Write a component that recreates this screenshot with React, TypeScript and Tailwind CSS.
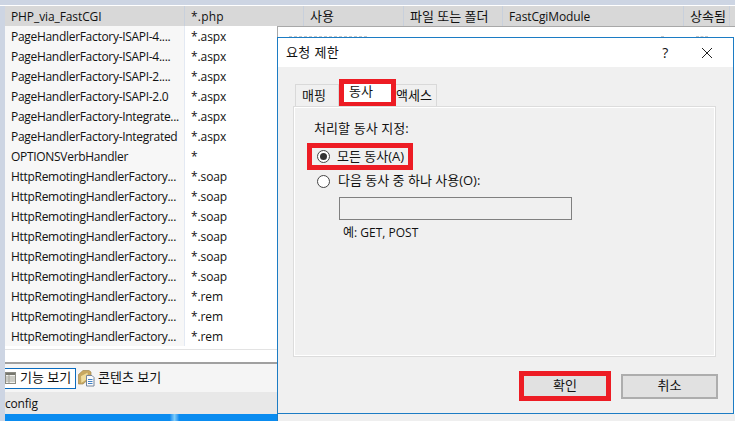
const FONT = "font-['Open_Sans','Noto_Sans_CJK_KR',sans-serif]";

const rows: [string, string][] = [
  ["PageHandlerFactory-ISAPI-4....", "*.aspx"],
  ["PageHandlerFactory-ISAPI-4....", "*.aspx"],
  ["PageHandlerFactory-ISAPI-2....", "*.aspx"],
  ["PageHandlerFactory-ISAPI-2.0", "*.aspx"],
  ["PageHandlerFactory-Integrate...", "*.aspx"],
  ["PageHandlerFactory-Integrated", "*.aspx"],
  ["OPTIONSVerbHandler", "*"],
  ["HttpRemotingHandlerFactory...", "*.soap"],
  ["HttpRemotingHandlerFactory...", "*.soap"],
  ["HttpRemotingHandlerFactory...", "*.soap"],
  ["HttpRemotingHandlerFactory...", "*.soap"],
  ["HttpRemotingHandlerFactory...", "*.soap"],
  ["HttpRemotingHandlerFactory...", "*.soap"],
  ["HttpRemotingHandlerFactory...", "*.rem"],
  ["HttpRemotingHandlerFactory...", "*.rem"],
  ["HttpRemotingHandlerFactory...", "*.rem"],
];

const headerCols = [
  { label: "*.php", w: "w-[119px]", cls: "tracking-[0.2px]" },
  { label: "사용", w: "w-[100px]", cls: "text-[13px]" },
  { label: "파일 또는 폴더", w: "w-[99px]", cls: "text-[13px]" },
  { label: "FastCgiModule", w: "w-[181px]", cls: "tracking-[-0.1px]" },
  { label: "상속됨", w: "w-[46px]", cls: "text-[13px]" },
];

function FeatureIcon() {
  return (
    <svg width="11" height="14" viewBox="0 0 11 14" className="shrink-0">
      <rect x="0.5" y="1.5" width="10" height="11" fill="#f2f2ee" stroke="#8c8c84" />
      <rect x="1" y="2" width="9" height="2" fill="#77776f" />
      <path d="M1 6h9M1 8h9M1 10h9M4 4v8" stroke="#a5a59c" strokeWidth="1" />
    </svg>
  );
}

function ContentIcon() {
  return (
    <svg width="17" height="18" viewBox="0 0 17 18" className="shrink-0">
      <path d="M0.5 5.5L5 1.5h6l2 1.5v5l-8 7H0.5z" fill="#c9a860" stroke="#a08850" strokeWidth="0.7" />
      <path d="M2.5 7L10 3v7l-7 4.5z" fill="#f0dc9c" stroke="#b89c58" strokeWidth="0.6" />
      <path d="M8.5 6.5h5.5l2 2v8.5H8.5z" fill="#fbfbfb" stroke="#75849a" />
      <path d="M10 10.5h4.5M10 12.5h4.5M10 14.5h4.5" stroke="#3f7fc4" strokeWidth="1" />
    </svg>
  );
}

function Radio({ checked }: { checked?: boolean }) {
  return (
    <span className="flex size-[13px] shrink-0 items-center justify-center rounded-full border border-[#444] bg-white">
      {checked && <span className="size-[7px] rounded-full bg-[#333]" />}
    </span>
  );
}

function BackgroundTable() {
  return (
    <div className="flex h-full w-[272px] flex-col">
      <div className="flex-none bg-white">
        {rows.map(([name, path], i) => (
          <div key={i} className="flex h-5 items-center">
            <div className="flex h-full w-[180px] items-center whitespace-nowrap border-r border-[#e3e9f3] bg-[#f7f7f7] pl-[6px] pt-px tracking-[-0.3px]">
              {name}
            </div>
            <div className="pl-[6px] pt-px tracking-[-0.1px]">{path}</div>
          </div>
        ))}
      </div>
      <div className="h-[3px] bg-white" />
      <div className="h-[13px] border-t border-[#e3e3e3] bg-white" />
      <div className="flex h-[30px] items-center border-t-2 border-[#a0a0a0] bg-[#f5f5f5]">
        <div className="flex h-[21px] w-[71px] items-center border-y-[1px] border-r-[1px] border-[#0a6cc0] bg-white">
          <FeatureIcon />
          <span className="ml-1 text-[13px]">기능 보기</span>
        </div>
        <div className="ml-[2px] flex items-center">
          <ContentIcon />
          <span className="ml-[3px] text-[13px]">콘텐츠 보기</span>
        </div>
      </div>
      <div className="flex h-[22px] items-center bg-[#e8e8e8] pt-[2px] tracking-[-0.2px]">config</div>
      <div className="relative flex-1 bg-[#0a8cf0]">
        <div className="absolute left-[165px] top-0 h-full w-[9px] bg-gradient-to-r from-[#0a8cf0] via-[#7cccf8] to-[#0a8cf0]" />
      </div>
    </div>
  );
}

function Dialog() {
  return (
    <div className="absolute left-[277px] top-[26px] flex h-[395px] w-[458px] flex-col border-t border-[#a8a8a8] bg-white">
      {/* clipped row of the window behind the dialog */}
      <div className="relative h-[10px] border-l border-[#a8a8a8]">
        <div className="absolute bottom-0 left-[11px] h-px w-[78px] border-b border-dashed border-[#c8c8c8]" />
        <div className="absolute bottom-0 left-[383px] h-px w-[3px] bg-[#c8c8c8]" />
        <div className="absolute bottom-0 left-[418px] h-px w-[12px] border-b border-dashed border-[#c8c8c8]" />
      </div>
      <div className="flex h-[377px] w-[457px] flex-col border border-[#1c7cc4] bg-[#f0f0f0]">
        <div className="flex h-[29px] flex-none items-center bg-white">
          <span className="ml-2 text-[13px] tracking-[0.4px]">요청 제한</span>
          <span className="ml-[323px] text-[14px]">?</span>
          <svg width="12" height="12" viewBox="0 0 12 12" className="ml-[33px]">
            <path d="M1 1l10 10M11 1L1 11" stroke="#222" strokeWidth="1" />
          </svg>
        </div>

        <div className="flex flex-1 flex-col px-[15px] pt-[12px]">
          <div className="relative z-10 flex h-[27px] items-end pl-[2px]">
            <div className="flex h-[22px] w-[44px] items-center border border-b-0 border-[#d9d9d9] bg-[#f0f0f0] pl-[6px] text-[13px]">
              매핑
            </div>
            <div className="flex h-[27px] w-[57px] items-center border-[5px] border-b-[4px] border-[#ed1c24] bg-white pl-[5px] pb-[2px] text-[13px]">
              동사
            </div>
            <div className="flex h-[22px] w-[41px] items-center justify-start whitespace-nowrap border border-b-0 border-l-0 border-[#d9d9d9] bg-[#f0f0f0] text-[13px]">
              액세스
            </div>
          </div>

          <div className="flex h-[251px] w-[423px] flex-col border border-[#dcdcdc] bg-[#f0f0f0] pl-[20px] pt-[12px] shadow-[inset_0_0_0_1px_#fff]">
            <div className="h-[18px] text-[13px] leading-[18px] tracking-[0.1px]">처리할 동사 지정:</div>
            <div className="ml-[-7px] mt-[6px] flex h-[27px] w-[106px] items-center border-[5px] border-[#ed1c24] bg-[#f0f0f0] pl-[5px]">
              <Radio checked />
              <span className="ml-[7px] whitespace-nowrap text-[13px]">모든 동사(A)</span>
            </div>
            <div className="mt-[2px] flex h-[18px] items-center pl-[3px]">
              <Radio />
              <span className="ml-[8px] whitespace-nowrap text-[13px]">다음 동사 중 하나 사용(O):</span>
            </div>
            <div className="ml-[25px] mt-[7px] h-[23px] w-[233px] border border-[#808080] bg-[#f0f0f0]" />
            <div className="ml-[29px] mt-[4px] h-[18px] leading-[18px]">예: GET, POST</div>
          </div>

          <div className="mt-[14px] flex h-[30px] items-center pl-[226px]">
            <div className="flex h-[30px] w-[92px] items-center justify-center border-[5px] border-[#ed1c24] bg-[#e1e1e1] text-[13px]">
              확인
            </div>
            <div className="ml-[10px] flex h-[25px] w-[97px] items-center justify-center border-2 border-[#adadad] bg-[#e1e1e1] text-[13px]">
              취소
            </div>
          </div>
        </div>
      </div>
      <div className="flex-1 border-l border-[#1c7cc4] bg-[#efefef]" />
    </div>
  );
}

export default function App() {
  return (
    <div className={`relative h-[421px] w-[735px] overflow-hidden bg-[#cdd5e3] text-[12px] text-[#111] ${FONT}`}>
      <div className="h-[5px]" />
      <div className="h-px bg-white" />
      <div className="ml-[5px] flex h-[20px] items-center bg-[#d8d8d8]">
        <div className="flex h-full w-[180px] items-center border-r border-[#c8d0dc] pl-[6px] pt-px tracking-[-0.1px]">PHP_via_FastCGI</div>
        {headerCols.map((c) => (
          <div key={c.label} className={`flex h-full items-center border-r border-[#c8d0dc] pl-[6px] pt-px ${c.w} ${c.cls}`}>
            {c.label}
          </div>
        ))}
      </div>
      <div className="ml-[5px] h-[395px]">
        <BackgroundTable />
      </div>
      <Dialog />
    </div>
  );
}
